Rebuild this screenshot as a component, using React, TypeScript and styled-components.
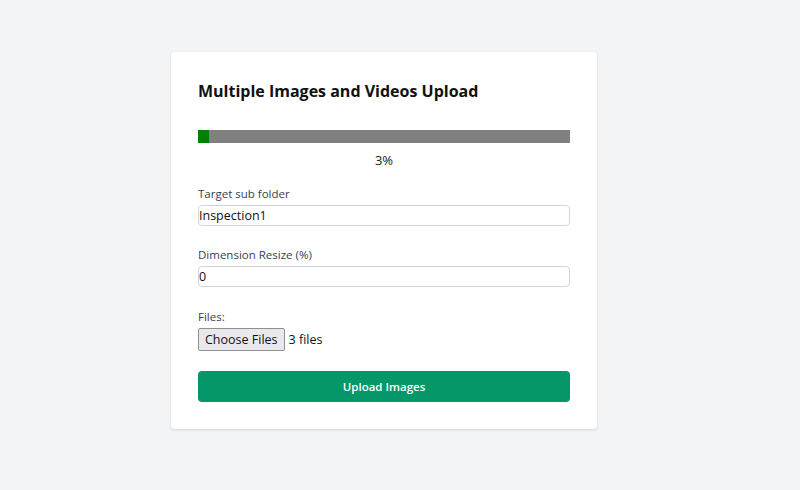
import React from "react";
import styled, { createGlobalStyle } from "styled-components";

const GlobalStyle = createGlobalStyle`
  html, body {
    margin: 0;
    padding: 0;
    background: #f3f4f6;
    font-family: "Open Sans", "Noto Sans", sans-serif;
  }
`;

const Page = styled.div`
  display: flex;
  justify-content: center;
  align-items: flex-start;
  padding: 52px 32px 0 0;
  min-height: 490px;
  box-sizing: border-box;
`;

const Card = styled.div`
  width: 426px;
  box-sizing: border-box;
  background: #fff;
  border-radius: 4px;
  box-shadow: 0 1px 3px rgba(0, 0, 0, 0.12);
  padding: 27px;
`;

const Title = styled.h2`
  margin: 0 0 27px;
  font-size: 16px;
  font-weight: 700;
  color: #111;
  line-height: 24px;
`;

const Track = styled.div`
  height: 13px;
  background: #808080;
`;

const Fill = styled.div`
  height: 100%;
  background: #008000;
`;

const Percent = styled.div`
  text-align: center;
  font-size: 13px;
  color: #222;
  margin-top: 8px;
  line-height: 18px;
`;

const Field = styled.div<{ $top: number }>`
  margin-top: ${(p) => p.$top}px;
`;

const Label = styled.label`
  display: block;
  font-size: 11.5px;
  font-weight: 500;
  color: #374151;
  line-height: 18px;
  margin-bottom: 2px;
`;

const Input = styled.input`
  display: block;
  width: 100%;
  box-sizing: border-box;
  height: 21px;
  border: 1px solid #d1d5db;
  border-radius: 4px;
  padding: 0;
  font-family: inherit;
  font-size: 12.5px;
  color: #111;
  background: #fff;
  outline: none;
`;

const FileRow = styled.div`
  display: flex;
  align-items: center;
  gap: 4px;
  font-size: 12.5px;
  color: #111;
`;

const ChooseButton = styled.span`
  display: inline-flex;
  align-items: center;
  height: 23px;
  box-sizing: border-box;
  padding: 0 6px;
  border: 1px solid #8f8f8f;
  border-radius: 2px;
  background: #e9e9ed;
  font-size: 12.5px;
  color: #111;
`;

const UploadButton = styled.button`
  display: block;
  width: 100%;
  height: 31px;
  margin-top: 20px;
  border: none;
  border-radius: 4px;
  background: #059669;
  color: #fff;
  font-family: inherit;
  font-size: 11.5px;
  font-weight: 600;
`;

export default function App() {
  const progress = 3;
  return (
    <>
      <GlobalStyle />
      <Page>
        <Card>
          <Title>Multiple Images and Videos Upload</Title>
          <Track>
            <Fill style={{ width: `${progress}%` }} />
          </Track>
          <Percent>{progress}%</Percent>
          <Field $top={16}>
            <Label>Target sub folder</Label>
            <Input defaultValue="Inspection1" />
          </Field>
          <Field $top={20}>
            <Label>Dimension Resize (%)</Label>
            <Input defaultValue="0" />
          </Field>
          <Field $top={21}>
            <Label>Files:</Label>
            <FileRow>
              <ChooseButton>Choose Files</ChooseButton>
              <span>3 files</span>
            </FileRow>
          </Field>
          <UploadButton>Upload Images</UploadButton>
        </Card>
      </Page>
    </>
  );
}
